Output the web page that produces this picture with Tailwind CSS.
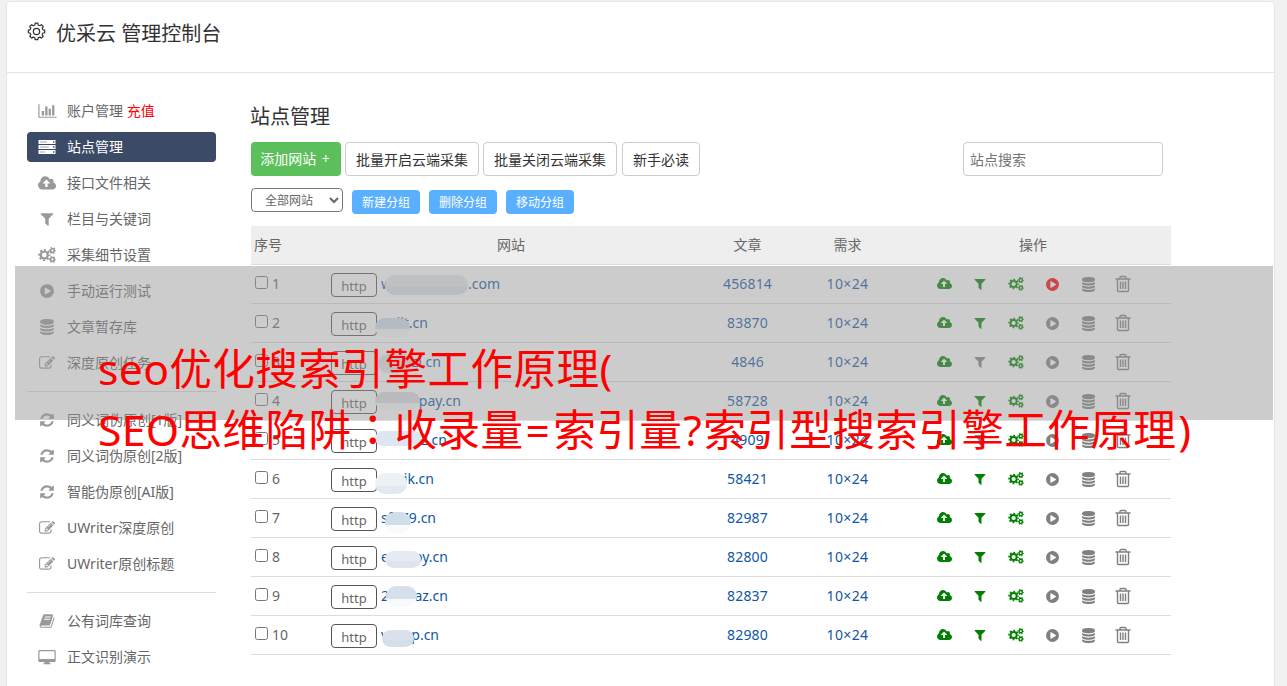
<!DOCTYPE html>
<html lang="zh-CN">
<head>
  <meta charset="UTF-8">
  <meta name="viewport" content="width=device-width, initial-scale=1.0">
  <title>优采云 管理控制台</title>
  <script src="https://cdn.jsdelivr.net/npm/@tailwindcss/browser@4"></script>
</head>

<body class="bg-[#f1f1f1] h-[686px] overflow-hidden relative pt-[2px] pl-[7px] text-sm text-[#666] font-['Noto_Sans','Noto_Sans_CJK_SC',sans-serif]">

  <!-- Icon sprite -->
  <svg class="hidden">
    <symbol id="i-chart" viewBox="0 0 2048 1792"><path d="M640 896v512h-256v-512h256zm384-512v1024h-256v-1024h256zm1024 1152v128h-2048v-1536h128v1408h1920zm-640-896v768h-256v-768h256zm384-384v1152h-256v-1152h256z"/></symbol>
    <symbol id="i-server" viewBox="0 0 18 14"><path fill-rule="evenodd" d="M.5 0h17v4H.5zM.5 5h17v4H.5zM.5 10h17v4H.5zM2 1.700v.6h7v-.6zM2 6.700v.6h9v-.6zM2 11.700v.6h5v-.6zM15 1.300v1.400h1.400V1.300zM15 6.300v1.400h1.400V6.300zM15 11.300v1.400h1.400v-1.400z"/></symbol>
    <symbol id="i-cloud" viewBox="0 0 1920 1792"><path d="M1280 864q0-14-9-23l-352-352q-9-9-23-9t-23 9l-351 351q-10 12-10 24 0 14 9 23t23 9h224v352q0 13 9.5 22.5t22.5 9.5h192q13 0 22.5-9.500t9.500-22.500v-352h224q13 0 22.500-9.500t9.500-22.500zm640 288q0 159-112.500 271.500t-271.500 112.500h-1088q-185 0-316.500-131.500t-131.500-316.500q0-130 70-240t188-165q-2-30-2-43 0-212 150-362t362-150q156 0 285.500 87t188.500 231q71-62 166-62 106 0 181 75t75 181q0 76-41 138 130 31 213.500 135.500t83.500 238.500z"/></symbol>
    <symbol id="i-filter" viewBox="0 0 1792 1792"><path d="M1595 295q17 41-14 70l-493 493v742q0 42-39 59-13 5-25 5-27 0-45-19l-256-256q-19-19-19-45v-486l-493-493q-31-29-14-70 17-39 59-39h1280q42 0 59 39z"/></symbol>
    <symbol id="i-cogs" viewBox="0 0 18 16">
      <g fill="none" stroke="currentColor">
        <circle cx="6.300" cy="8" r="3.500" stroke-width="2.200"/>
        <circle cx="6.300" cy="8" r="5.200" stroke-width="1.800" stroke-dasharray="2.040 2.040" stroke-dashoffset="1.020"/>
        <circle cx="14.400" cy="3.600" r="1.900" stroke-width="1.600"/>
        <circle cx="14.400" cy="3.600" r="2.900" stroke-width="1.200" stroke-dasharray="1.520 1.517" stroke-dashoffset=".7"/>
        <circle cx="14.400" cy="12.400" r="1.900" stroke-width="1.600"/>
        <circle cx="14.400" cy="12.400" r="2.900" stroke-width="1.200" stroke-dasharray="1.520 1.517" stroke-dashoffset=".7"/>
      </g>
    </symbol>
    <symbol id="i-play" viewBox="0 0 1792 1792"><path d="M896 128q209 0 385.500 103t279.500 279.500 103 385.500-103 385.500-279.500 279.500-385.500 103-385.500-103-279.500-279.500-103-385.500 103-385.500 279.500-279.500 385.500-103zm384 823q32-18 32-55t-32-55l-544-320q-31-19-64-1-32 19-32 56v640q0 37 32 56 16 8 32 8 17 0 32-9z"/></symbol>
    <symbol id="i-db" viewBox="0 0 1792 1792"><path d="M896 768q237 0 443-43t325-127v170q0 69-103 128t-280 93.500-385 34.500-385-34.500-280-93.500-103-128v-170q119 84 325 127t443 43zm0 768q237 0 443-43t325-127v170q0 69-103 128t-280 93.500-385 34.500-385-34.500-280-93.500-103-128v-170q119 84 325 127t443 43zm0-384q237 0 443-43t325-127v170q0 69-103 128t-280 93.500-385 34.500-385-34.500-280-93.500-103-128v-170q119 84 325 127t443 43zm0-1152q208 0 385 34.500t280 93.500 103 128v128q0 69-103 128t-280 93.500-385 34.500-385-34.500-280-93.500-103-128v-128q0-69 103-128t280-93.500 385-34.500z"/></symbol>
    <symbol id="i-edit" viewBox="0 0 1792 1792"><path d="M888 1184l116-116-152-152-116 116v56h96v96h56zm440-720q-16-16-33 1l-350 350q-17 17-1 33t33-1l350-350q17-17 1-33zm80 594v190q0 119-84.500 203.500t-203.500 84.500h-832q-119 0-203.500-84.500t-84.500-203.500v-832q0-119 84.500-203.500t203.500-84.500h832q63 0 117 25 15 7 18 23 3 17-9 29l-49 49q-14 14-32 8-23-6-45-6h-832q-66 0-113 47t-47 113v832q0 66 47 113t113 47h832q66 0 113-47t47-113v-126q0-13 9-22l64-64q15-15 35-7t20 29zm-96-738l288 288-672 672h-288v-288zm444 132l-92 92-288-288 92-92q28-28 68-28t68 28l152 152q28 28 28 68t-28 68z"/></symbol>
    <symbol id="i-refresh" viewBox="0 0 1792 1792"><path d="M1639 1056q0 5-1 7-64 268-268 434.500t-478 166.500q-146 0-282.500-55t-243.500-157l-129 129q-19 19-45 19t-45-19-19-45v-448q0-26 19-45t45-19h448q26 0 45 19t19 45-19 45l-137 137q71 66 161 102t187 36q134 0 250-65t186-179q11-17 53-117 8-23 30-23h192q13 0 22.500 9.500t9.500 22.500zm25-800v448q0 26-19 45t-45 19h-448q-26 0-45-19t-19-45 19-45l138-138q-148-137-349-137-134 0-250 65t-186 179q-11 17-53 117-8 23-30 23h-199q-13 0-22.500-9.500t-9.500-22.500v-7q65-268 270-434.500t480-166.500q146 0 284 55.500t245 156.500l130-129q19-19 45-19t45 19 19 45z"/></symbol>
    <symbol id="i-book" viewBox="0 0 1792 1792"><path d="M1703 478q40 57 18 129l-275 906q-19 64-76.500 107.500t-122.500 43.500h-923q-77 0-148.500-53.500t-99.500-131.500q-24-67-2-127 0-4 3-27t4-37q1-8-3-21.500t-3-19.500q2-11 8-21t16.500-23.500 16.500-23.500q23-38 45-91.500t30-91.500q3-10 .5-30t-.5-28q3-11 17-28t17-23q21-36 42-92t25-90q1-9-2.500-32t.5-28q4-13 22-30.500t22-22.500q19-26 42.500-84.500t27.500-96.500q1-8-3-25.500t-2-26.500q2-8 9-18t18-23 17-21q8-12 16.500-30.500t15-35 16-36 19.500-32 26.500-23.500 36-11.500 47.500 5.500l-1 3q38-9 51-9h761q74 0 114 56t18 130l-274 906q-36 119-71.500 153.500t-128.500 34.500h-869q-27 0-38 15-11 16-1 43 24 70 144 70h923q29 0 56-15.500t35-41.500l300-987q7-22 5-57 38 15 59 43zm-1064 2q-4 13 2 22.500t20 9.500h608q13 0 25.500-9.500t16.500-22.500l21-64q4-13-2-22.500t-20-9.500h-608q-13 0-25.500 9.500t-16.500 22.500zm-83 256q-4 13 2 22.500t20 9.500h608q13 0 25.500-9.500t16.500-22.500l21-64q4-13-2-22.500t-20-9.500h-608q-13 0-25.500 9.500t-16.500 22.500z"/></symbol>
    <symbol id="i-desktop" viewBox="0 0 18 16"><path fill-rule="evenodd" d="M1.500 1h15a1.200 1.200 0 0 1 1.200 1.200v9.600a1.200 1.200 0 0 1-1.200 1.200H11.500v1.200h1.200V15.300H5.300V14.200h1.200V13h-5A1.200 1.200 0 0 1 .3 11.800V2.200A1.200 1.200 0 0 1 1.500 1zM1.500 2.200v7.800h15V2.200z"/></symbol>
    <symbol id="i-trash" viewBox="0 0 16 18"><path fill="none" stroke="currentColor" stroke-width="1.400" d="M.5 4h15M5 4V2.500A1 1 0 0 1 6 1.500h4a1 1 0 0 1 1 1V4M2.500 4v11.500a1 1 0 0 0 1 1h9a1 1 0 0 0 1-1V4M5.500 6.500v7.500M8 6.500v7.500M10.500 6.500v7.500"/></symbol>
    <symbol id="i-gear" viewBox="0 0 20 20">
      <g fill="none" stroke="currentColor" stroke-width="1.300">
        <circle cx="10" cy="10" r="3.300"/>
        <path stroke-linejoin="round" d="M8.300 3.100 8.600 1.300h2.800l.3 1.800 1.900.8 1.500-1.100 2 2-1.100 1.500.8 1.900 1.800.3v2.800l-1.800.3-.8 1.900 1.100 1.500-2 2-1.500-1.100-1.900.8-.3 1.800H8.600l-.3-1.800-1.900-.8-1.500 1.100-2-2L4 13.500l-.8-1.900-1.800-.3V8.500l1.800-.3L4 6.300 2.900 4.800l2-2 1.500 1.100z"/>
      </g>
    </symbol>
  </svg>

  <!-- Panel -->
  <div class="w-[1267px] h-[700px] bg-white rounded-t-[4px] shadow-[0_0_0_1px_#e6e6e6]">
    <header class="h-[71px] border-b border-[#e5e5e5] flex items-start pl-5 pt-[16px] text-[#333]">
      <svg class="w-[19px] h-[19px] mt-[4px]"><use href="#i-gear"/></svg>
      <h1 class="text-[20px] leading-[32px] ml-[10px]">优采云 管理控制台</h1>
    </header>

    <div class="flex">
      <!-- Sidebar -->
      <nav class="w-[189px] ml-5 pt-[23px]" id="sidebar"></nav>

      <!-- Main -->
      <main class="w-[920px] ml-[35px] pt-[28px]">
        <h2 class="text-[20px] leading-[32px] text-[#333] -ml-px">站点管理</h2>

        <div class="flex mt-[9px] h-[34px] text-[#333]">
          <button class="w-[90px] rounded-[4px] bg-[#5bc05b] text-white pr-[2px]">添加网站&nbsp;<span class="ml-[2px]">+</span></button>
          <button class="w-[134px] ml-1 pt-[2px] rounded-[4px] border border-[#ccc]">批量开启云端采集</button>
          <button class="w-[134px] ml-1 pt-[2px] rounded-[4px] border border-[#ccc]">批量关闭云端采集</button>
          <button class="w-[78px] ml-[5px] pt-[2px] rounded-[4px] border border-[#ccc]">新手必读</button>
          <input type="text" placeholder="站点搜索" class="w-[200px] ml-auto mr-2 px-[6px] pt-[2px] rounded-[4px] border border-[#ccc] placeholder-[#757575]">
        </div>

        <div class="flex mt-3 h-[26px] text-xs text-white gap-[9px]">
          <select class="w-[92px] h-6 pl-[9px] pt-px rounded-[4px] border border-[#767676] bg-white text-[#666]"><option>全部网站</option></select>
          <button class="w-[68px] h-6 mt-[2px] pt-[2px] rounded-[4px] bg-[#5aafff]">新建分组</button>
          <button class="w-[68px] h-6 mt-[2px] pt-[2px] rounded-[4px] bg-[#5aafff]">删除分组</button>
          <button class="w-[68px] h-6 mt-[2px] pt-[2px] rounded-[4px] bg-[#5aafff]">移动分组</button>
        </div>

        <!-- Site table -->
        <div class="mt-3">
          <div class="grid grid-cols-[76px_368px_105px_95px_276px] items-center h-[39px] bg-[#eee] border-b border-[#ddd] text-center">
            <span class="text-left pl-[3px]">序号</span><span>网站</span><span>文章</span><span>需求</span><span>操作</span>
          </div>
          <div id="rows"></div>
        </div>
      </main>
    </div>
  </div>

  <!-- Title banner -->
  <div class="absolute left-[15px] top-[266px] w-[1258px] h-[154px] bg-[#949494]/48"></div>
  <div class="absolute left-[98px] top-[339px] whitespace-nowrap text-[42.67px] leading-[60px] text-[#f00] tracking-[0.35px]">
    <p>seo优化搜索引擎工作原理(</p>
    <p class="-mt-px">SEO思维陷阱<span class="font-['Noto_Sans_CJK_TC']" lang="zh-TW">：</span>收录量<span class="pl-[2px] pr-[3px]">=</span>索引量<span class="px-px">?</span>索引型搜索引擎工作原理<span class="pl-[2px]">)</span></p>
  </div>

  <script>
    const menu = [
      ['chart', '账户管理 <span class="text-[#f00]">充值</span>'],
      ['server', '站点管理'],
      ['cloud', '接口文件相关'],
      ['filter', '栏目与关键词'],
      ['cogs', '采集细节设置'],
      ['play', '手动运行测试'],
      ['db', '文章暂存库'],
      ['edit', '深度原创任务'],
      null,
      ['refresh', '同义词伪原创[1版]'],
      ['refresh', '同义词伪原创[2版]'],
      ['refresh', '智能伪原创[AI版]'],
      ['edit', 'UWriter深度原创'],
      ['edit', 'UWriter原创标题'],
      null,
      ['book', '公有词库查询'],
      ['desktop', '正文识别演示'],
    ];
    const iconSize = { chart: 'w-[19px] h-4', cloud: 'w-[18px] h-[17px]', server: 'w-[18px] h-[14px]', cogs: 'w-[18px] h-4', desktop: 'w-[18px] h-4' };

    document.getElementById('sidebar').innerHTML = menu.map((m) => {
      if (!m) return '<hr class="border-[#ddd] mt-[13px] mb-[13px]">';
      const on = m[0] === 'server';
      return `<a class="flex items-center h-[30px] mb-[6px] rounded-[4px] ${on ? 'bg-[#3b4a66] text-white' : ''}">
        <span class="w-[40px] flex justify-center ${on ? 'text-white' : 'text-[#999]'}"><svg class="fill-current ${iconSize[m[0]] || 'w-4 h-4'}"><use href="#i-${m[0]}"/></svg></span>
        <span>${m[1]}</span></a>`;
    }).join('');

    // start, end, width, article count, mask: [left, top, width, height, colour 1, colour 2]
    const sites = [
      ['w', '.com', 119, 456814, [4, 10, 83, 20, '#e4e8ec', '#dce2e8']],
      ['', 'llt.cn', 47, 83870, [-6, 14, 35, 19, '#d4dfec', '#fafafa']],
      ['', 'zl.cn', 60, 4846, [-3, 11, 34, 19, '#e0e4ea', '#e0e6ee']],
      ['', 'pay.cn', 80, 58728, [-6, 10, 45, 18, '#d8dde4', '#fafafa']],
      ['', 'z.cn', 66, 4909, [-6, 10, 47, 15, '#dde6f1', '#dde6f1']],
      ['', 'ik.cn', 53, 58421, [-6, 13, 32, 21, '#eef1f4', '#e2e9f1']],
      ['sf', '79.cn', 55, 82987, [4, 13, 26, 21, '#d0deea', '#fafafa']],
      ['e', 'oy.cn', 67, 82800, [4, 13, 36, 17, '#e6ebf1', '#dde4ed']],
      ['2', 'az.cn', 67, 82837, [5, 9, 31, 21, '#d6e0ea', '#f8fafc']],
      ['v', 'p.cn', 58, 82980, [1, 14, 32, 17, '#d9e2ec', '#d3dfeb']],
    ];
    const icon = (name, size, color) => `<span class="w-9 flex justify-center ${color}"><svg class="fill-current ${size}"><use href="#i-${name}"/></svg></span>`;

    document.getElementById('rows').innerHTML = sites.map(([a, b, w, count, m], i) => `
      <div class="grid grid-cols-[76px_368px_105px_95px_276px] items-center h-[39px] border-b border-[#ddd] text-center text-[#0f56a5]">
        <label class="flex items-center pl-1 gap-1 text-[#666]"><input type="checkbox" class="w-[13px] h-[13px] -mt-[3px]">${i + 1}</label>
        <div class="flex items-center pl-1 h-[38px]">
          <span class="w-[46px] h-6 mt-[2px] rounded-[4px] border border-[#555] text-[13px] leading-[24px] text-[#666]">http</span>
          <span class="relative ml-1 h-[38px] leading-[38px] flex justify-between" style="width:${w}px"><span>${a}</span><span>${b}</span>
            <i class="absolute rounded-[10px]" style="left:${m[0]}px;top:${m[1]}px;width:${m[2]}px;height:${m[3]}px;background:linear-gradient(${m[4]} 60%,${m[5]} 60%)"></i>
          </span>
        </div>
        <span class="tracking-[0.15px]">${count}</span>
        <span class="tracking-[0.4px]">10×24</span>
        <div class="flex items-center pl-[31px]">
          ${icon('cloud', 'w-[15px] h-[14px]', 'text-[#008000]')}
          ${icon('filter', 'w-[14px] h-[14px]', i === 2 || i === 4 ? 'text-[#808080]' : 'text-[#008000]')}
          ${icon('cogs', 'w-[16px] h-[14px]', 'text-[#008000]')}
          ${icon('play', 'w-[15px] h-[15px]', i === 0 ? 'text-[#f00]' : 'text-[#808080]')}
          ${icon('db', 'w-[15px] h-[15px]', 'text-[#808080]')}
          ${icon('trash', 'w-[16px] h-[18px] -ml-[2px]', 'text-[#808080]')}
        </div>
      </div>`).join('');
  </script>
</body>
</html>
